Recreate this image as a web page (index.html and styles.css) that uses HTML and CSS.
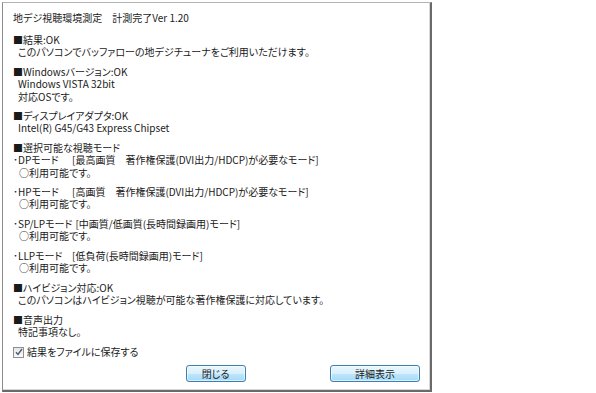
FILE: index.html
```html
<!DOCTYPE html>
<html lang="ja">
<head>
<meta charset="utf-8">
<title>地デジ視聴環境測定</title>
<link rel="stylesheet" href="styles.css">
</head>
<body>
<div class="panel">
  <div class="content">
    <div class="title">地デジ視聴環境測定　計測完了Ver 1.20</div>

    <div class="group">
      <div>■結果:OK</div>
      <div class="ind">このパソコンでバッファローの地デジチューナをご利用いただけます。</div>
    </div>

    <div class="group">
      <div>■Windowsバージョン:OK</div>
      <div class="ind">Windows VISTA 32bit</div>
      <div class="ind">対応OSです。</div>
    </div>

    <div class="group">
      <div>■ディスプレイアダプタ:OK</div>
      <div class="ind">Intel(R) G45/G43 Express Chipset</div>
    </div>

    <div class="group">
      <div>■選択可能な視聴モード</div>
      <div><span class="mode">･DPモード</span>[最高画質　著作権保護(DVI出力/HDCP)が必要なモード]</div>
      <div class="ok">○利用可能です。</div>
    </div>

    <div class="group">
      <div><span class="mode">･HPモード</span>[高画質　著作権保護(DVI出力/HDCP)が必要なモード]</div>
      <div class="ok">○利用可能です。</div>
    </div>

    <div class="group">
      <div><span class="mode short">･SP/LPモード</span>[中画質/低画質(長時間録画用)モード]</div>
      <div class="ok">○利用可能です。</div>
    </div>

    <div class="group">
      <div><span class="mode">･LLPモード</span>[低負荷(長時間録画用)モード]</div>
      <div class="ok">○利用可能です。</div>
    </div>

    <div class="group">
      <div>■ハイビジョン対応:OK</div>
      <div class="ind">このパソコンはハイビジョン視聴が可能な著作権保護に対応しています。</div>
    </div>

    <div class="group">
      <div>■音声出力</div>
      <div class="ind">特記事項なし。</div>
    </div>

    <label class="check">
      <span class="box"><svg width="8" height="8" viewBox="0 0 8 8"><path d="M1 4.2 L3 6.5 L7 1" fill="none" stroke="#4a5d7a" stroke-width="1.4"/></svg></span>
      <span>結果をファイルに保存する</span>
    </label>

    <div class="buttons">
      <span></span>
      <button class="btn close">閉じる</button>
      <div class="right"><button class="btn detail">詳細表示</button></div>
    </div>
  </div>
</div>
</body>
</html>
```

FILE: styles.css
```css
html, body {
  margin: 0;
  padding: 0;
  background: #ffffff;
}

body {
  font-family: "Noto Sans CJK JP", "Noto Sans", sans-serif;
  font-size: 10px;
  line-height: 12.2px;
  color: #1a1a1a;
  font-feature-settings: "palt";
}

.panel {
  margin: 2px 0 0 2px;
  width: 427px;
  height: 387px;
  border-top: 1px solid #b4b4b4;
  border-left: 1px solid #8c8c8c;
  border-right: 2px solid #6a6a6a;
  border-bottom: 2px solid #6a6a6a;
  box-shadow: inset -1px -1px 0 #d8d8d8;
  background: #ffffff;
}

.content {
  padding: 9px 10px 0 10px;
  display: flex;
  flex-direction: column;
}

.title {
  margin-bottom: 10px;
}

.group {
  margin-bottom: 7.5px;
}

.ind {
  padding-left: 5px;
}

.ok {
  padding-left: 6px;
}

.mode {
  display: inline-block;
  min-width: 59px;
}

.mode.short {
  min-width: 0;
  padding-right: 3px;
}

.check {
  display: flex;
  align-items: center;
  gap: 3px;
  margin-top: 0.5px;
  height: 12px;
}

.box {
  width: 9px;
  height: 9px;
  border: 1px solid #8e8f8f;
  background: linear-gradient(#e6e6e6, #fbfbfb);
  display: flex;
  align-items: center;
  justify-content: center;
}

.buttons {
  display: grid;
  grid-template-columns: 1fr auto 1fr;
  align-items: center;
  margin-top: 7px;
}

.right {
  display: flex;
  justify-content: flex-end;
}

.btn {
  height: 17px;
  padding: 0;
  border: 1px solid #3c7fb1;
  border-radius: 3px;
  background: linear-gradient(#eaf6fd 0%, #d9f0fc 50%, #bee6fd 51%, #a7d9f5 100%);
  font-family: "Noto Sans CJK JP", sans-serif;
  font-size: 10px;
  color: #1a1a1a;
  font-feature-settings: "palt";
  box-shadow: inset 0 0 0 1px rgba(255,255,255,0.6);
}

.close {
  width: 60px;
  margin-right: 2px;
}

.detail {
  width: 90px;
}
```
